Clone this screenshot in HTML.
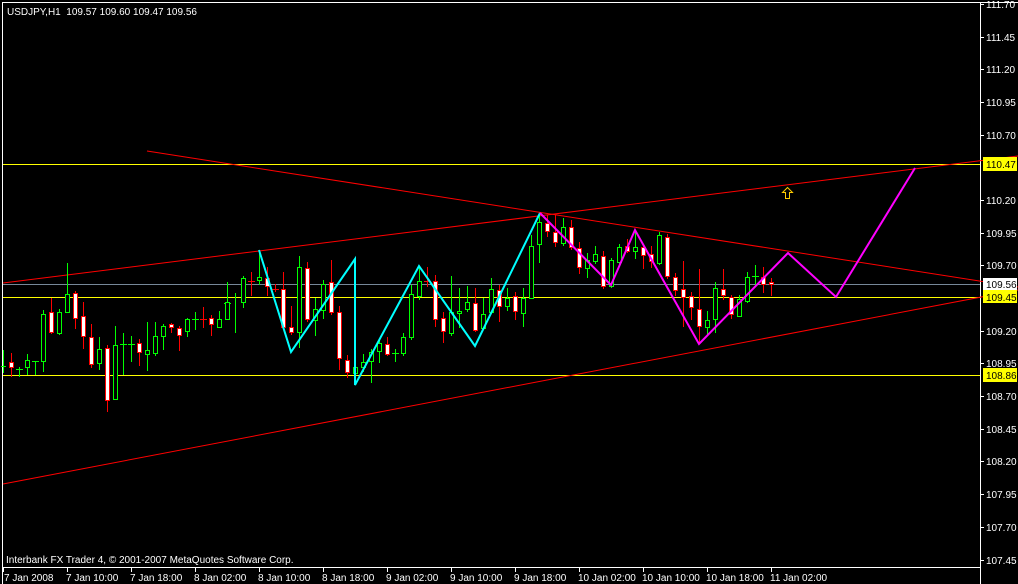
<!DOCTYPE html>
<html><head><meta charset="utf-8"><style>
html,body{margin:0;padding:0;background:#000;width:1018px;height:584px;overflow:hidden}
svg{display:block}
text{font-family:"Liberation Sans",sans-serif;font-size:10px}
</style></head><body>
<svg width="1018" height="584" xmlns="http://www.w3.org/2000/svg" shape-rendering="crispEdges">
<rect width="1018" height="584" fill="#000"/>
<path d="M2.5 584V2.5H1018M2.5 567.5H980.5M980.5 2.5V584" stroke="#fff" fill="none"/>
<line x1="3" y1="164.5" x2="980" y2="164.5" stroke="#ffff00"/>
<line x1="3" y1="284.5" x2="980" y2="284.5" stroke="#778899"/>
<line x1="3" y1="297.5" x2="980" y2="297.5" stroke="#ffff00"/>
<line x1="3" y1="375.5" x2="980" y2="375.5" stroke="#ffff00"/>
<g stroke="#ff0000" stroke-width="1" shape-rendering="auto">
<line x1="3" y1="283" x2="1018" y2="156"/>
<line x1="147" y1="151" x2="1018" y2="287"/>
<line x1="3" y1="484" x2="1018" y2="290"/>
</g>
<g stroke="#00ff00" fill="#000">
<path d="M3.5 350V373M19.5 367V377M27.5 354V375M35.5 361V375M43.5 310V372M59.5 309V335M67.5 263V313M99.5 337V370M115.5 326V399M123.5 333V375M131.5 336V362M147.5 322V371M155.5 322V356M163.5 324V350M187.5 318V337M195.5 312V330M219.5 311V328M227.5 282V320M235.5 293V333M243.5 276V308M259.5 250V285M299.5 256V348M315.5 298V336M323.5 280V319M355.5 360V380M363.5 354V372M371.5 349V383M379.5 340V363M395.5 349V362M403.5 333V356M411.5 285V340M419.5 267V300M451.5 276V336M459.5 288V328M467.5 286V312M483.5 298V330M491.5 278V314M507.5 288V311M523.5 288V327M531.5 235V299M539.5 213V263M563.5 218V246M587.5 253V278M595.5 246V264M611.5 258V288M619.5 244V265M635.5 230V259M659.5 232V265M707.5 311V335M715.5 282V333M739.5 295V317M747.5 272V303M755.5 265V287"/>
<path d="M1 366.5H6M16 369.5H23M32 361.5H39M120 344.5H127M128 344.5H135M192 319.5H199M224 303.5H231M392 353.5H399M752 276.5H759"/>
<rect x="25.5" y="360.5" width="4" height="7"/><rect x="41.5" y="314.5" width="4" height="47"/><rect x="57.5" y="312.5" width="4" height="21"/><rect x="65.5" y="294.5" width="4" height="18"/><rect x="97.5" y="349.5" width="4" height="14"/><rect x="113.5" y="345.5" width="4" height="54"/><rect x="145.5" y="350.5" width="4" height="4"/><rect x="153.5" y="336.5" width="4" height="17"/><rect x="161.5" y="326.5" width="4" height="10"/><rect x="185.5" y="319.5" width="4" height="12"/><rect x="217.5" y="319.5" width="4" height="8"/><rect x="225.5" y="302.5" width="4" height="17"/><rect x="241.5" y="278.5" width="4" height="24"/><rect x="257.5" y="277.5" width="4" height="3"/><rect x="297.5" y="267.5" width="4" height="65"/><rect x="313.5" y="309.5" width="4" height="11"/><rect x="321.5" y="284.5" width="4" height="26"/><rect x="353.5" y="367.5" width="4" height="6"/><rect x="361.5" y="362.5" width="4" height="5"/><rect x="369.5" y="352.5" width="4" height="9"/><rect x="377.5" y="343.5" width="4" height="8"/><rect x="401.5" y="337.5" width="4" height="16"/><rect x="409.5" y="294.5" width="4" height="43"/><rect x="417.5" y="281.5" width="4" height="15"/><rect x="449.5" y="312.5" width="4" height="21"/><rect x="457.5" y="311.5" width="4" height="2"/><rect x="465.5" y="302.5" width="4" height="7"/><rect x="481.5" y="314.5" width="4" height="14"/><rect x="489.5" y="289.5" width="4" height="23"/><rect x="505.5" y="298.5" width="4" height="8"/><rect x="521.5" y="298.5" width="4" height="15"/><rect x="529.5" y="246.5" width="4" height="52"/><rect x="537.5" y="222.5" width="4" height="22"/><rect x="561.5" y="227.5" width="4" height="16"/><rect x="585.5" y="260.5" width="4" height="8"/><rect x="593.5" y="254.5" width="4" height="7"/><rect x="609.5" y="260.5" width="4" height="26"/><rect x="617.5" y="247.5" width="4" height="15"/><rect x="633.5" y="247.5" width="4" height="4"/><rect x="657.5" y="235.5" width="4" height="28"/><rect x="705.5" y="320.5" width="4" height="7"/><rect x="713.5" y="288.5" width="4" height="31"/><rect x="737.5" y="299.5" width="4" height="17"/><rect x="745.5" y="277.5" width="4" height="24"/>
</g>
<g stroke="#ff0000" fill="#fff">
<path d="M11.5 353V377M51.5 298V334M75.5 291V329M83.5 302V349M91.5 324V368M107.5 345V412M139.5 339V366M171.5 323V333M179.5 326V351M203.5 307V328M211.5 315V336M251.5 272V296M267.5 267V296M275.5 284V292M283.5 272V330M291.5 306V335M307.5 262V322M331.5 260V315M339.5 306V370M347.5 355V378M387.5 337V356M427.5 267V287M435.5 275V327M443.5 312V343M475.5 288V332M499.5 285V322M515.5 292V320M547.5 215V237M555.5 215V247M571.5 220V250M579.5 242V274M603.5 251V289M627.5 239V253M643.5 244V269M651.5 246V268M667.5 234V279M675.5 273V296M683.5 261V327M691.5 292V320M699.5 269V343M723.5 269V300M731.5 295V319M763.5 267V293M771.5 278V296"/>
<path d="M200 319.5H207M248 281.5H255M272 289.5H279M424 281.5H431"/>
<rect x="9.5" y="362.5" width="4" height="5"/><rect x="49.5" y="312.5" width="4" height="20"/><rect x="73.5" y="293.5" width="4" height="25"/><rect x="81.5" y="316.5" width="4" height="20"/><rect x="89.5" y="337.5" width="4" height="27"/><rect x="105.5" y="348.5" width="4" height="52"/><rect x="137.5" y="343.5" width="4" height="9"/><rect x="169.5" y="324.5" width="4" height="3"/><rect x="177.5" y="328.5" width="4" height="7"/><rect x="209.5" y="318.5" width="4" height="6"/><rect x="265.5" y="278.5" width="4" height="8"/><rect x="281.5" y="289.5" width="4" height="38"/><rect x="289.5" y="327.5" width="4" height="5"/><rect x="305.5" y="268.5" width="4" height="51"/><rect x="329.5" y="282.5" width="4" height="30"/><rect x="337.5" y="312.5" width="4" height="46"/><rect x="345.5" y="360.5" width="4" height="12"/><rect x="385.5" y="344.5" width="4" height="10"/><rect x="433.5" y="281.5" width="4" height="38"/><rect x="441.5" y="318.5" width="4" height="13"/><rect x="473.5" y="303.5" width="4" height="27"/><rect x="497.5" y="290.5" width="4" height="16"/><rect x="513.5" y="296.5" width="4" height="15"/><rect x="545.5" y="223.5" width="4" height="8"/><rect x="553.5" y="232.5" width="4" height="10"/><rect x="569.5" y="227.5" width="4" height="20"/><rect x="577.5" y="248.5" width="4" height="19"/><rect x="601.5" y="256.5" width="4" height="30"/><rect x="625.5" y="246.5" width="4" height="5"/><rect x="641.5" y="247.5" width="4" height="8"/><rect x="649.5" y="254.5" width="4" height="7"/><rect x="665.5" y="237.5" width="4" height="39"/><rect x="673.5" y="277.5" width="4" height="13"/><rect x="681.5" y="289.5" width="4" height="8"/><rect x="689.5" y="296.5" width="4" height="11"/><rect x="697.5" y="309.5" width="4" height="17"/><rect x="721.5" y="289.5" width="4" height="6"/><rect x="729.5" y="297.5" width="4" height="17"/><rect x="761.5" y="277.5" width="4" height="7"/><rect x="769.5" y="282.5" width="4" height="2"/>
</g>
<polyline points="259,250 291,352 355,259 355,385 419,266 475,346 540,213" fill="none" stroke="#00ffff" stroke-width="2" shape-rendering="auto"/>
<polyline points="540,213 611,285 635,230 699,344 788,253 836,297 915,168" fill="none" stroke="#ff00ff" stroke-width="2" shape-rendering="auto"/>
<path d="M787.5 187.5L782.5 192.5H785.5V198.5H789.5V192.5H792.5Z" fill="none" stroke="#ffcc00" shape-rendering="auto"/>
<text x="7" y="15" fill="#fff" xml:space="preserve">USDJPY,H1  109.57 109.60 109.47 109.56</text>
<text x="6" y="563" fill="#fff">Interbank FX Trader 4, © 2001-2007 MetaQuotes Software Corp.</text>
<g stroke="#fff"><path d="M981 4.5H984M981 37.5H984M981 69.5H984M981 102.5H984M981 135.5H984M981 200.5H984M981 233.5H984M981 265.5H984M981 331.5H984M981 363.5H984M981 396.5H984M981 429.5H984M981 461.5H984M981 494.5H984M981 527.5H984M981 560.5H984"/></g>
<g fill="#fff">
<text x="986" y="8">111.70</text><text x="986" y="41">111.45</text><text x="986" y="73">111.20</text><text x="986" y="106">110.95</text><text x="986" y="139">110.70</text><text x="986" y="204">110.20</text><text x="986" y="237">109.95</text><text x="986" y="269">109.70</text><text x="986" y="335">109.20</text><text x="986" y="367">108.95</text><text x="986" y="400">108.70</text><text x="986" y="433">108.45</text><text x="986" y="465">108.20</text><text x="986" y="498">107.95</text><text x="986" y="531">107.70</text><text x="986" y="564">107.45</text>
</g>
<rect x="983" y="157" width="34" height="14" fill="#ffff00"/><text x="986" y="168" fill="#000">110.47</text>
<rect x="983" y="278" width="34" height="12" fill="#fff"/><text x="986" y="288" fill="#000">109.56</text>
<rect x="983" y="290" width="34" height="13" fill="#ffff00"/><text x="986" y="301" fill="#000">109.45</text>
<rect x="983" y="368" width="34" height="14" fill="#ffff00"/><text x="986" y="379" fill="#000">108.86</text>
<g stroke="#fff"><path d="M3.5 568V572M67.5 568V572M131.5 568V572M195.5 568V572M259.5 568V572M323.5 568V572M387.5 568V572M451.5 568V572M515.5 568V572M579.5 568V572M643.5 568V572M707.5 568V572M771.5 568V572"/></g>
<g fill="#fff" font-size="9.5">
<text x="4" y="581" font-size="9.5">7 Jan 2008</text><text x="66" y="581" font-size="9.5">7 Jan 10:00</text><text x="130" y="581" font-size="9.5">7 Jan 18:00</text><text x="194" y="581" font-size="9.5">8 Jan 02:00</text><text x="258" y="581" font-size="9.5">8 Jan 10:00</text><text x="322" y="581" font-size="9.5">8 Jan 18:00</text><text x="386" y="581" font-size="9.5">9 Jan 02:00</text><text x="450" y="581" font-size="9.5">9 Jan 10:00</text><text x="514" y="581" font-size="9.5">9 Jan 18:00</text><text x="578" y="581" font-size="9.5">10 Jan 02:00</text><text x="642" y="581" font-size="9.5">10 Jan 10:00</text><text x="706" y="581" font-size="9.5">10 Jan 18:00</text><text x="770" y="581" font-size="9.5">11 Jan 02:00</text>
</g>
</svg>
</body></html>
